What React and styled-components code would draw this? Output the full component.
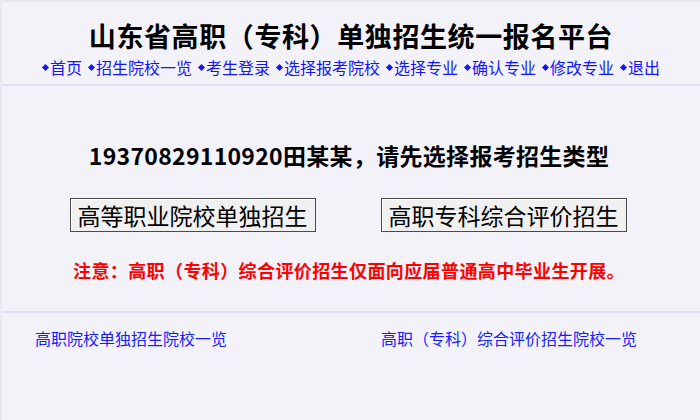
import React from "react";
import styled, { createGlobalStyle } from "styled-components";

const Global = createGlobalStyle`
  html, body { margin: 0; padding: 0; background: #f2f2f8; }
  body { font-family: "Noto Sans CJK SC", "Noto Sans", sans-serif; }
`;

const Page = styled.div`
  min-height: 418px;
  background: #f2f2f8;
  border-top: 2px solid #e6e6ec;
  border-left: 2px solid #e9e9ef;
`;

const Header = styled.header`
  padding: 18px 0 7px;
  border-bottom: 2px solid #dedefa;
  text-align: center;
`;

const Title = styled.h1`
  margin: 0;
  font-size: 27px;
  line-height: 32px;
  font-weight: 700;
  color: #000;
  letter-spacing: 0.6px;
`;

const Nav = styled.nav`
  margin-top: 5px;
  display: flex;
  justify-content: center;
  gap: 6px;
  font-size: 16px;
  line-height: 20px;
`;

const NavLink = styled.a`
  display: inline-flex;
  align-items: center;
  color: #1414ff;
  text-decoration: none;
  &::before {
    content: "";
    width: 5px;
    height: 5px;
    margin: 0 2px 0 1px;
    background: #1414ff;
    transform: rotate(45deg);
  }
`;

const Main = styled.main`
  padding: 54px 0 29px;
  border-bottom: 2px solid #dedefa;
  display: flex;
  flex-direction: column;
  align-items: center;
`;

const Heading = styled.h2`
  margin: 0;
  font-size: 23px;
  line-height: 30px;
  font-weight: 700;
  color: #000;
  letter-spacing: 0.3px;
  padding-right: 4px;
`;

const Buttons = styled.div`
  margin-top: 28px;
  display: flex;
  gap: 65px;
  padding-right: 6px;
`;

const Choice = styled.button`
  height: 34px;
  padding: 0 7px;
  font-family: inherit;
  font-size: 23px;
  line-height: 30px;
  color: #000;
  background: #f0f0f0;
  border: 1px solid #4a4a4a;
  box-shadow: inset 1px 1px 0 #ffffff;
  border-radius: 0;
`;

const Notice = styled.p`
  margin: 26px 0 0;
  font-size: 18px;
  line-height: 24px;
  font-weight: 700;
  color: #ff0000;
  letter-spacing: 0.4px;
  padding-right: 4px;
`;

const Footer = styled.footer`
  display: grid;
  grid-template-columns: 346px 1fr;
  padding-top: 14px;
`;

const FootLink = styled.a`
  padding-left: ${(p) => p.$indent}px;
  font-size: 16px;
  line-height: 22px;
  color: #1a1aff;
  text-decoration: none;
`;

const navItems = [
  "首页",
  "招生院校一览",
  "考生登录",
  "选择报考院校",
  "选择专业",
  "确认专业",
  "修改专业",
  "退出",
];

export default function App() {
  return (
    <>
      <Global />
      <Page>
        <Header>
          <Title>山东省高职（专科）单独招生统一报名平台</Title>
          <Nav>
            {navItems.map((t) => (
              <NavLink key={t} href="#">
                {t}
              </NavLink>
            ))}
          </Nav>
        </Header>
        <Main>
          <Heading>19370829110920田某某，请先选择报考招生类型</Heading>
          <Buttons>
            <Choice>高等职业院校单独招生</Choice>
            <Choice>高职专科综合评价招生</Choice>
          </Buttons>
          <Notice>注意：高职（专科）综合评价招生仅面向应届普通高中毕业生开展。</Notice>
        </Main>
        <Footer>
          <FootLink href="#" $indent={33}>
            高职院校单独招生院校一览
          </FootLink>
          <FootLink href="#" $indent={33}>
            高职（专科）综合评价招生院校一览
          </FootLink>
        </Footer>
      </Page>
    </>
  );
}
